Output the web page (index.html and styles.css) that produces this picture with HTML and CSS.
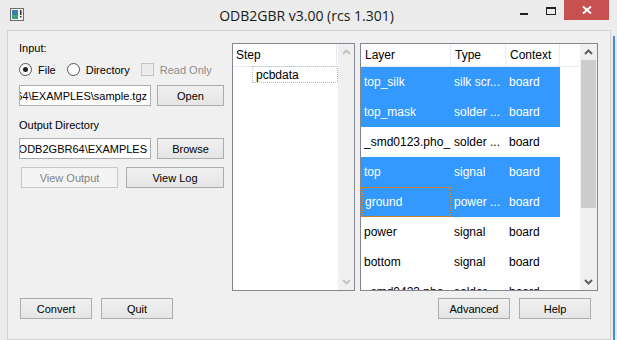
FILE: index.html
```html
<!DOCTYPE html>
<html lang="en">
<head>
    <meta charset="UTF-8">
    <title>ODB2GBR v3.00 (rcs 1.301)</title>
    <link rel="stylesheet" href="styles.css">
</head>
<body>

    <div class="window">
        <div class="titlebar">
            <div class="app-icon">
                <svg width="14" height="13" viewBox="0 0 14 13">
                    <rect x="0.5" y="0.5" width="13" height="12" fill="#f4f4f4" stroke="#6b6b6b"/>
                    <rect x="2" y="2" width="6" height="9" fill="#3c7fa8"/>
                    <rect x="2" y="7" width="6" height="4" fill="#3fa07a"/>
                    <rect x="10" y="2" width="1.5" height="5" fill="#333"/>
                    <rect x="10" y="8" width="1.5" height="1.5" fill="#333"/>
                </svg>
            </div>
            <div class="title">ODB2GBR v3.00 (rcs 1.301)</div>
            <div class="controls">
                <div class="ctl ctl-min"><span class="min-glyph"></span></div>
                <div class="ctl ctl-max"><span class="max-glyph"></span></div>
                <div class="ctl ctl-close">
                    <svg width="10" height="8" viewBox="0 0 10 8">
                        <path d="M1 0.5 L9 7.5 M9 0.5 L1 7.5" stroke="#fff" stroke-width="2"/>
                    </svg>
                </div>
            </div>
        </div>

        <div class="client">
            <div class="main">
                <div class="left-col">
                    <div class="label">Input:</div>
                    <div class="radio-row">
                        <span class="radio checked"></span><span class="opt-text">File</span>
                        <span class="radio"></span><span class="opt-text">Directory</span>
                        <span class="checkbox"></span><span class="opt-text disabled">Read Only</span>
                    </div>
                    <div class="field-row">
                        <div class="textbox"><span>C:\Program Files\ODB2GBR64\EXAMPLES\sample.tgz</span></div>
                        <button class="btn btn-side">Open</button>
                    </div>
                    <div class="label label-out">Output Directory</div>
                    <div class="field-row field-row-2">
                        <div class="textbox"><span>C:\Artwork\Download\ODB2GBR64\EXAMPLES</span></div>
                        <button class="btn btn-side">Browse</button>
                    </div>
                    <div class="view-row">
                        <button class="btn btn-view" disabled>View Output</button>
                        <button class="btn btn-log">View Log</button>
                    </div>
                </div>

                <div class="panel step-panel">
                    <div class="list">
                        <div class="list-head">
                            <div class="head-cell step-head">Step</div>
                        </div>
                        <div class="step-item">pcbdata</div>
                    </div>
                    <div class="scrollbar">
                        <div class="sb-arrow">
                            <svg width="9" height="6" viewBox="0 0 9 6"><path d="M1 5 L4.5 1.5 L8 5" fill="none" stroke="#c4c4c4" stroke-width="2"/></svg>
                        </div>
                        <div class="sb-track"></div>
                        <div class="sb-arrow">
                            <svg width="9" height="6" viewBox="0 0 9 6"><path d="M1 1 L4.5 4.5 L8 1" fill="none" stroke="#c4c4c4" stroke-width="2"/></svg>
                        </div>
                    </div>
                </div>

                <div class="panel layer-panel">
                    <div class="list">
                        <div class="list-head">
                            <div class="head-cell col-layer">Layer</div>
                            <div class="head-cell col-type">Type</div>
                            <div class="head-cell col-ctx">Context</div>
                        </div>
                        <div class="row selected"><div class="cell col-layer">top_silk</div><div class="cell col-type">silk scr...</div><div class="cell col-ctx">board</div></div>
                        <div class="row selected"><div class="cell col-layer">top_mask</div><div class="cell col-type">solder ...</div><div class="cell col-ctx">board</div></div>
                        <div class="row"><div class="cell col-layer">_smd0123.pho_</div><div class="cell col-type">solder ...</div><div class="cell col-ctx">board</div></div>
                        <div class="row selected"><div class="cell col-layer">top</div><div class="cell col-type">signal</div><div class="cell col-ctx">board</div></div>
                        <div class="row selected"><div class="cell col-layer focus">ground</div><div class="cell col-type">power ...</div><div class="cell col-ctx">board</div></div>
                        <div class="row"><div class="cell col-layer">power</div><div class="cell col-type">signal</div><div class="cell col-ctx">board</div></div>
                        <div class="row"><div class="cell col-layer">bottom</div><div class="cell col-type">signal</div><div class="cell col-ctx">board</div></div>
                        <div class="row"><div class="cell col-layer">_smd0423.pho_</div><div class="cell col-type">solder ...</div><div class="cell col-ctx">board</div></div>
                    </div>
                    <div class="scrollbar">
                        <div class="sb-arrow">
                            <svg width="9" height="6" viewBox="0 0 9 6"><path d="M1 5 L4.5 1.5 L8 5" fill="none" stroke="#606060" stroke-width="2"/></svg>
                        </div>
                        <div class="sb-track">
                            <div class="sb-thumb"></div>
                        </div>
                        <div class="sb-arrow">
                            <svg width="9" height="6" viewBox="0 0 9 6"><path d="M1 1 L4.5 4.5 L8 1" fill="none" stroke="#606060" stroke-width="2"/></svg>
                        </div>
                    </div>
                </div>
            </div>

            <div class="bottom-bar">
                <div class="btn-group">
                    <button class="btn btn-bottom">Convert</button>
                    <button class="btn btn-bottom">Quit</button>
                </div>
                <div class="btn-group btn-group-right">
                    <button class="btn btn-bottom">Advanced</button>
                    <button class="btn btn-bottom">Help</button>
                </div>
            </div>
        </div>
    </div>
    <div class="desk-edge"></div>

</body>
</html>
```

FILE: styles.css
```css
body {
    margin: 0;
    width: 617px;
    height: 340px;
    overflow: hidden;
    display: flex;
    background-color: #ececec;
    font-family: "Liberation Sans", Arial, sans-serif;
    font-size: 11px;
    color: #000;
}
.window {
    width: 613px;
    height: 340px;
    display: flex;
    flex-direction: column;
}
.desk-edge {
    width: 2px;
    margin-top: 36px;
    background-color: #3c8fe0;
}

/* title bar */
.titlebar {
    height: 30px;
    display: grid;
    grid-template-columns: 1fr auto 1fr;
    flex-shrink: 0;
}
.app-icon {
    padding: 8px 0 0 10px;
}
.title {
    font-family: "Open Sans", "Liberation Sans", sans-serif;
    font-size: 14px;
    line-height: 20px;
    padding-top: 6px;
    color: #1a1a1a;
}
.controls {
    display: flex;
    justify-content: flex-end;
    padding-right: 4px;
}
.ctl {
    height: 20px;
    display: flex;
    align-items: center;
    justify-content: center;
}
.ctl-min {
    width: 26px;
}
.ctl-max {
    width: 27px;
}
.ctl-close {
    width: 45px;
    background-color: #c75050;
}
.min-glyph {
    width: 8px;
    height: 2px;
    margin-top: 7px;
    background-color: #222;
}
.max-glyph {
    width: 8px;
    height: 5px;
    margin-top: 2px;
    border: 1px solid #222;
    border-top-width: 2px;
}

/* client area */
.client {
    height: 302px;
    margin-left: 7px;
    margin-right: 2px;
    border: 1px solid #d2d2d2;
    background-color: #f0f0f0;
    padding: 12px 12px 0 11px;
    display: flex;
    flex-direction: column;
}
.main {
    display: flex;
    height: 248px;
}
.left-col {
    width: 205px;
    margin-top: -1px;
    margin-right: 8px;
    display: flex;
    flex-direction: column;
}
.label {
    line-height: 13px;
}
.label-out {
    margin-top: 13px;
}
.radio-row {
    display: flex;
    align-items: center;
    height: 13px;
    margin-top: 8px;
}
.radio {
    width: 11px;
    height: 11px;
    border: 1px solid #555;
    border-radius: 50%;
    background-color: #fff;
    position: relative;
}
.radio.checked::after {
    content: "";
    position: absolute;
    left: 3px;
    top: 3px;
    width: 5px;
    height: 5px;
    border-radius: 50%;
    background-color: #222;
}
.checkbox {
    width: 11px;
    height: 11px;
    border: 1px solid #c4c4c4;
    background-color: #ececec;
}
.opt-text {
    margin-left: 6px;
    margin-right: 11px;
}
.opt-text.disabled {
    color: #8d8d8d;
}
.field-row {
    display: flex;
    gap: 6px;
    height: 21px;
    margin-top: 9px;
}
.field-row-2 {
    margin-top: 6px;
}
.textbox {
    width: 129px;
    border: 1px solid #abadb3;
    background-color: #fff;
    display: flex;
    justify-content: flex-end;
    align-items: center;
    overflow: hidden;
    white-space: nowrap;
    padding-right: 3px;
}
.btn {
    font-family: "Liberation Sans", Arial, sans-serif;
    font-size: 11px;
    color: #000;
    padding: 0;
    border: 1px solid #acacac;
    background: linear-gradient(#f0f0f0, #e5e5e5);
    height: 21px;
}
.btn:disabled {
    color: #838383;
    border-color: #c8c8c8;
    background: #f4f4f4;
}
.btn-side {
    width: 68px;
}
.view-row {
    display: flex;
    margin-top: 8px;
}
.btn-view {
    width: 97px;
    margin-left: 2px;
}
.btn-log {
    width: 98px;
    margin-left: 8px;
}

/* list panels */
.panel {
    border: 1px solid #828790;
    background-color: #fff;
    display: flex;
    overflow: hidden;
}
.step-panel {
    width: 121px;
    margin-right: 5px;
}
.layer-panel {
    width: 236px;
}
.list {
    flex: 1;
    overflow: hidden;
    font-size: 12px;
}
.list-head {
    display: flex;
    height: 22px;
    border-bottom: 1px solid #e4ecf5;
}
.head-cell {
    line-height: 22px;
    padding-left: 4px;
    border-right: 1px solid #e4ecf5;
    box-sizing: border-box;
}
.step-head {
    width: 104px;
    padding-left: 3px;
}
.step-item {
    width: 86px;
    height: 17px;
    line-height: 16px;
    margin: -1px 0 0 19px;
    padding-left: 3px;
    border: 1px dotted #b8b8b8;
    box-sizing: border-box;
}
.col-layer {
    width: 90px;
}
.col-type {
    width: 55px;
}
.col-ctx {
    width: 54px;
}
.row {
    display: flex;
    height: 30px;
    width: 199px;
}
.row.selected {
    background-color: #3399ff;
    color: #fff;
}
.cell {
    line-height: 30px;
    padding-left: 3px;
    white-space: nowrap;
    overflow: hidden;
    box-sizing: border-box;
}
.cell.focus {
    border: 1px dotted #d6883a;
    line-height: 28px;
    padding-left: 2px;
    margin-left: 1px;
    width: 89px;
}

/* scrollbars */
.scrollbar {
    width: 17px;
    background-color: #f0f0f0;
    display: flex;
    flex-direction: column;
}
.step-panel .scrollbar {
    width: 16px;
}
.sb-arrow {
    height: 16px;
    display: flex;
    align-items: center;
    justify-content: center;
}
.sb-track {
    flex: 1;
    padding: 0 1px;
}
.sb-thumb {
    height: 148px;
    background-color: #cdcdcd;
}

/* bottom buttons */
.bottom-bar {
    display: flex;
    justify-content: space-between;
    margin-top: 7px;
}
.btn-group {
    display: flex;
    gap: 9px;
    margin-left: 1px;
}
.btn-group-right {
    margin-right: 7px;
}
.btn-bottom {
    width: 72px;
}
```
